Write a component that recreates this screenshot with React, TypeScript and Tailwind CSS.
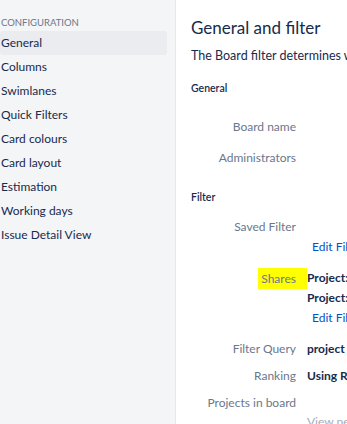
const navItems = [
  'General',
  'Columns',
  'Swimlanes',
  'Quick Filters',
  'Card colours',
  'Card layout',
  'Estimation',
  'Working days',
  'Issue Detail View',
];

function Row({
  label,
  children,
  highlight,
  className = '',
}: {
  label: string;
  children?: React.ReactNode;
  highlight?: boolean;
  className?: string;
}) {
  return (
    <div className={`flex ${className}`}>
      <div className={`flex w-[116px] shrink-0 justify-end ${highlight ? '' : 'pr-[11px]'}`}>
        {highlight ? (
          <span className="h-[21px] bg-[#ffff00] pl-[3px] pr-[11px] leading-[21px] text-[#6b778c]">{label}</span>
        ) : (
          <span className="leading-[20px] text-[#6b778c]">{label}</span>
        )}
      </div>
      <div className="min-w-0 flex-1 whitespace-nowrap leading-[20px] text-[#172b4d]">{children}</div>
    </div>
  );
}

export default function App() {
  return (
    <div
      className="flex h-[424px] w-[347px] overflow-hidden bg-white text-[12px] text-[#172b4d]"
      style={{ fontFamily: 'Lato, "Segoe UI", sans-serif' }}
    >
      <aside className="h-full w-[176px] shrink-0 border-r border-[#e6e8ec] bg-[#f4f5f7] pr-[8px]">
        <div className="mt-[17px] h-[12px] pl-[1px] text-[9.5px] leading-[12px] text-[#6b778c]">CONFIGURATION</div>
        <ul className="mt-[2px]">
          {navItems.map((item, i) => (
            <li
              key={item}
              className={`h-[24px] rounded-[3px] pl-[1px] leading-[24px] ${i === 0 ? 'bg-[#ebecf0]' : ''}`}
            >
              {item}
            </li>
          ))}
        </ul>
      </aside>

      <main className="min-w-0 flex-1 overflow-hidden whitespace-nowrap pl-[15px] pt-[14px]">
        <h1 className="h-[28px] text-[17px] leading-[28px]">General and filter</h1>
        <p className="mt-[5px] text-[12.5px] leading-[18px]">The Board filter determines which issues appear on the board.</p>

        <h2 className="mt-[15px] text-[10.5px] font-semibold leading-[16px]">General</h2>
        <Row label="Board name" className="mt-[21px]" />
        <Row label="Administrators" className="mt-[11px]" />

        <h2 className="mt-[21px] text-[10.5px] font-semibold leading-[16px]">Filter</h2>
        <Row label="Saved Filter" className="mt-[12px]">
          <div className="h-[20px]" />
          <a className="pl-[5px] text-[#0052cc]">Edit Filter Query</a>
        </Row>
        <Row label="Shares" highlight className="mt-[11px]">
          <div className="font-bold">Project: Sample</div>
          <div className="font-bold">Project: Sample</div>
          <a className="pl-[5px] text-[#0052cc]">Edit Filter Shares</a>
        </Row>
        <Row label="Filter Query" className="mt-[11px]">
          <span className="font-bold">project = SAMPLE</span>
        </Row>
        <Row label="Ranking" className="mt-[7px]">
          <span className="font-bold">Using Rank</span>
        </Row>
        <Row label="Projects in board" className="mt-[7px]">
          <div className="h-[19px]" />
          <span className="text-[#a5adba]">View permissions</span>
        </Row>
      </main>
    </div>
  );
}
